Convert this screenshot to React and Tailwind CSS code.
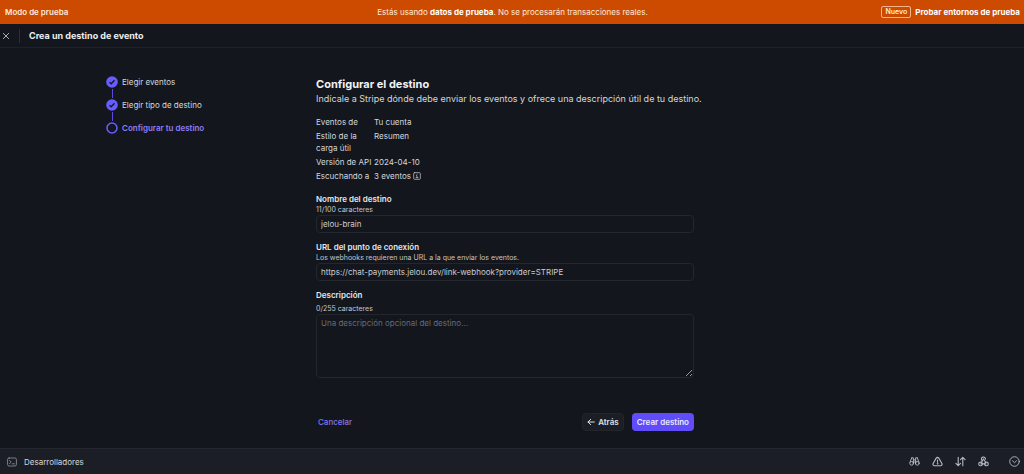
import React, { useState } from "react";

const steps = [
    { label: "Elegir eventos", done: true },
    { label: "Elegir tipo de destino", done: true },
    { label: "Configurar tu destino", done: false },
];

const details = [
    { term: "Eventos de", value: "Tu cuenta" },
    { term: "Estilo de la carga útil", value: "Resumen" },
    { term: "Versión de API", value: "2024-04-10" },
    { term: "Escuchando a", value: "3 eventos", info: true },
];

const Icon = ({ children, className = "size-3" }) => (
    <svg viewBox="0 0 12 12" fill="none" stroke="currentColor" strokeWidth="1" strokeLinecap="round" strokeLinejoin="round" className={`shrink-0 ${className}`} aria-hidden="true">
        {children}
    </svg>
);

const Banner = () => (
    <div className="grid h-6 grid-cols-[1fr_auto_1fr] items-center bg-[#cc4b00] pr-1 pl-[5px] text-[8px] leading-3 text-[#ffe9d9]">
        <p className="font-semibold">Modo de prueba</p>
        <p>
            Estás usando <b className="font-bold text-white">datos de prueba</b>. No se procesarán transacciones reales.
        </p>
        <div className="flex items-center justify-end gap-1">
            <span className="rounded-[2px] border border-[#f3b48d] px-[3px] text-[7px] leading-[10px] font-semibold">Nuevo</span>
            <a href="#entornos" className="font-bold text-white">Probar entornos de prueba</a>
        </div>
    </div>
);

const Stepper = () => (
    <ol className="w-[210px] shrink-0 pt-[28px] text-[8px] leading-3 text-[#d3d6dc]">
        {steps.map((step, i) => (
            <li key={step.label}>
                {i > 0 && <div className="my-px ml-[6px] h-[9px] w-px bg-[#5d4be0]" />}
                <div className="flex items-center gap-1">
                    <svg viewBox="0 0 12 12" fill="none" className="size-3 shrink-0" aria-hidden="true">
                        {step.done ? (
                            <>
                                <circle cx="6" cy="6" r="5.8" fill="#675dff" />
                                <path d="M3.5 6.2 5.2 7.8 8.5 4.3" stroke="#14171d" strokeWidth="1.3" />
                            </>
                        ) : (
                            <circle cx="6" cy="6" r="5" stroke="#675dff" strokeWidth="1.6" />
                        )}
                    </svg>
                    <span className={step.done ? "" : "font-semibold text-[#8d7ffa]"}>{step.label}</span>
                </div>
            </li>
        ))}
    </ol>
);

const Field = ({ id, label, hint, gap = "", children }) => (
    <div className="flex flex-col">
        <label htmlFor={id} className={`text-[8px] leading-3 font-semibold text-[#e4e6ea] ${gap}`}>{label}</label>
        <p className="mb-px text-[7px] leading-[9px] text-[#c3c7ce]">{hint}</p>
        {children}
    </div>
);

const inputStyle = "w-full rounded-sm border border-[#23262d] bg-[#13161c] px-1 text-[8px] text-[#c9ccd3] outline-none focus:border-[#675dff]";

const Footer = () => (
    <footer className="flex h-[26px] items-center justify-between border-t border-[#24272f] bg-[#1b1e25] pr-1 pl-[7px] text-[#b4b9c5]">
        <button className="flex items-center gap-[7px] text-[8px] leading-3 text-[#d3d6dc]">
            <Icon className="size-[10px] text-[#8b91a0]">
                <rect x="0.7" y="1.2" width="10.6" height="9.6" rx="1.8" />
                <path d="M3 4 5 6 3 8M6.3 8.2H9" />
            </Icon>
            Desarrolladores
        </button>
        <div className="flex items-center gap-3">
            <button aria-label="Inspeccionar">
                <Icon className="size-[11px]">
                    <path d="M3 2H4.8V8.5M3 2 1.1 6.7M9 2H7.2V8.5M9 2 10.9 6.7M4.8 4.2H7.2M4.8 6.5H7.2" />
                    <circle cx="2.9" cy="8" r="2" />
                    <circle cx="9.1" cy="8" r="2" />
                </Icon>
            </button>
            <button aria-label="Errores">
                <Icon className="size-[11px]">
                    <path d="M6 1.5c.6 0 1.1.3 1.4.8l3.4 5.9c.6 1.1-.1 2.4-1.4 2.4H2.600C1.300 10.600.6 9.300 1.200 8.200l3.400-5.900c.3-.5.8-.8 1.400-.8zM6 4.500V6.700" strokeWidth="1.200" />
                    <circle cx="6" cy="8.500" r=".4" fill="currentColor" />
                </Icon>
            </button>
            <button aria-label="Eventos">
                <Icon className="size-[11px]">
                    <path d="M3.5 1.5V10.5M1 8 3.5 10.5 6 8M8.5 10.5V1.5M6 4 8.5 1.5 11 4" strokeWidth="1.200" />
                </Icon>
            </button>
            <button aria-label="Webhooks">
                <Icon className="size-[11px]">
                    <path d="M4.200 4.700A2.200 2.200 0 1 1 8.100 3.600M6 3.300 3.600 7.300M6 3.300 8.200 6.600M3.200 8.600H8.500" strokeWidth="1.200" />
                    <circle cx="2.800" cy="8.700" r="2" strokeWidth="1.200" />
                    <circle cx="9.200" cy="8.700" r="2" strokeWidth="1.200" />
                </Icon>
            </button>
            <button aria-label="Contraer" className="ml-2">
                <Icon className="size-[11px]">
                    <circle cx="6" cy="6" r="5.2" />
                    <path d="M3.8 5.2 6 7.3 8.2 5.2" />
                </Icon>
            </button>
        </div>
    </footer>
);

const App = () => {
    const [name, setName] = useState("jelou-brain");
    const [url, setUrl] = useState("https://chat-payments.jelou.dev/link-webhook?provider=STRIPE");
    const [description, setDescription] = useState("");

    return (
        <div className="flex min-h-screen flex-col bg-[#13161c] font-['Inter',sans-serif]">
            <Banner />
            <header className="flex h-6 items-center border-b border-[#1e2127] pl-[2px]">
                <button aria-label="Cerrar" className="text-[#c3c7ce]">
                    <Icon className="size-2">
                        <path d="M2 2 10 10M10 2 2 10" strokeWidth="1.3" />
                    </Icon>
                </button>
                <div className="ml-[9px] h-[14px] w-px bg-[#2a2d34]" />
                <h1 className="ml-[9px] text-[9px] leading-3 font-bold text-[#eceef1]">Crea un destino de evento</h1>
            </header>

            <main className="mx-auto flex w-full max-w-[812px] flex-1">
                <Stepper />
                <form className="flex w-full max-w-[378px] flex-col pt-[29px]" onSubmit={(e) => e.preventDefault()}>
                    <h2 className="text-[11px] leading-[14px] font-bold text-[#f1f2f4]">Configurar el destino</h2>
                    <p className="text-[9px] leading-4 text-[#d3d6dc] sm:whitespace-nowrap">Indícale a Stripe dónde debe enviar los eventos y ofrece una descripción útil de tu destino.</p>

                    <dl className="mt-[9px] flex flex-col gap-[2px] text-[8px] leading-3 text-[#d3d6dc]">
                        {details.map((d) => (
                            <div key={d.term} className="flex gap-[2px]">
                                <dt className="w-14 shrink-0">{d.term}</dt>
                                <dd className="flex h-3 items-center gap-[2px]">
                                    {d.value}
                                    {d.info && (
                                        <Icon className="size-2">
                                            <rect x="1" y="1" width="10" height="10" rx="1.5" />
                                            <path d="M6 3.2V3.4M5 5.5H6V8.5M4.5 8.5H7.5" />
                                        </Icon>
                                    )}
                                </dd>
                            </div>
                        ))}
                    </dl>

                    <div className="mt-[11px] flex flex-col gap-2">
                        <Field id="name" label="Nombre del destino" hint="11/100 caracteres">
                            <input id="name" type="text" value={name} onChange={(e) => setName(e.target.value)} className={`${inputStyle} h-[18px]`} />
                        </Field>
                        <Field id="url" label="URL del punto de conexión" hint="Los webhooks requieren una URL a la que enviar los eventos.">
                            <input id="url" type="text" value={url} onChange={(e) => setUrl(e.target.value)} className={`${inputStyle} h-[18px]`} />
                        </Field>
                        <Field id="description" label="Descripción" hint="0/255 caracteres" gap="mb-[3px]">
                            <textarea id="description" value={description} onChange={(e) => setDescription(e.target.value)} placeholder="Una descripción opcional del destino..." className={`${inputStyle} h-16 resize-y pt-[2px] leading-3 placeholder:text-[#666b7a]`} />
                        </Field>
                    </div>

                    <div className="mt-[35px] flex items-center gap-2 text-[8px] leading-3 font-semibold">
                        <button type="button" className="mr-auto px-[2px] font-medium text-[#8378ec]">Cancelar</button>
                        <button type="button" className="flex h-[18px] items-center gap-[3px] rounded-sm border border-[#22252c] bg-[#1b1e25] px-1 text-[#dfe1e6]">
                            <Icon className="size-2">
                                <path d="M11 6H1.5M5.5 2 1.5 6 5.5 10" strokeWidth="1.5" />
                            </Icon>
                            Atrás
                        </button>
                        <button type="submit" className="h-[18px] rounded-sm bg-[#5f4dfa] px-[5px] text-[#eceaff]">Crear destino</button>
                    </div>
                </form>
            </main>

            <Footer />
        </div>
    );
};

export default App;
